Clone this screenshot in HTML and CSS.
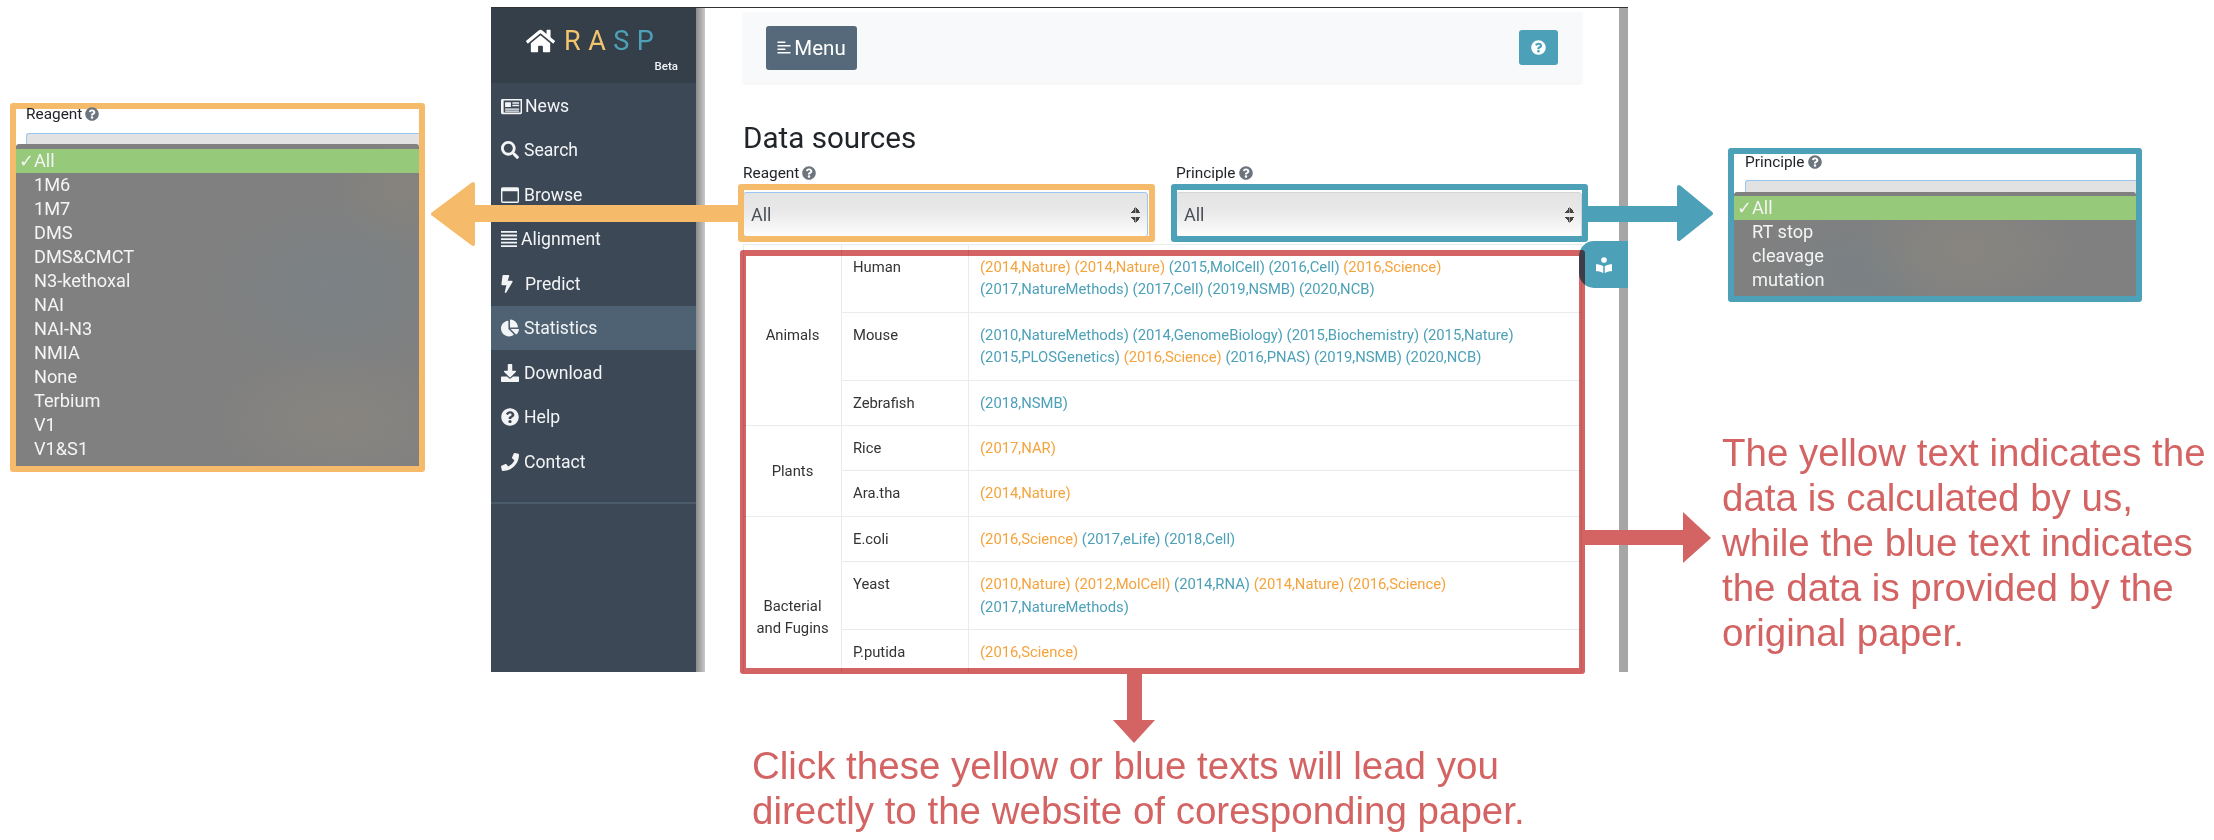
FILE: index.html
```html
<!DOCTYPE html>
<html lang="en">
<head>
  <meta charset="UTF-8">
  <title>RASP data sources</title>
  <link rel="stylesheet" href="styles.css">
</head>
<body>
  <svg class="sprite" width="0" height="0">
    <symbol id="i-home" viewBox="0 0 576 512"><path d="M280.37 148.26L96 300.11V464a16 16 0 0 0 16 16l112.06-.29a16 16 0 0 0 15.92-16V368a16 16 0 0 1 16-16h64a16 16 0 0 1 16 16v95.64a16 16 0 0 0 16 16.05L464 480a16 16 0 0 0 16-16V300L295.67 148.26a12.19 12.19 0 0 0-15.3 0zM571.6 251.47L488 182.56V44.05a12 12 0 0 0-12-12h-56a12 12 0 0 0-12 12v72.61L318.47 43a48 48 0 0 0-61 0L4.34 251.47a12 12 0 0 0-1.6 16.9l25.5 31A12 12 0 0 0 45.15 301l235.22-193.74a12.19 12.19 0 0 1 15.3 0L530.9 301a12 12 0 0 0 16.9-1.6l25.5-31a12 12 0 0 0-1.7-16.93z"/></symbol>
    <symbol id="i-news" viewBox="0 0 576 448"><path fill-rule="evenodd" d="M40 32h536v376a40 40 0 0 1-40 40H40a40 40 0 0 1-40-40V72a40 40 0 0 1 40-40zm32 40v328h464V72z"/><path d="M112 120h160v130H112zM312 120h184v40H312zM312 190h184v40H312zM112 290h384v36H112zM112 350h384v30H112z"/></symbol>
    <symbol id="i-search" viewBox="0 0 512 512"><path d="M505 442.7L405.3 343c-4.5-4.5-10.6-7-17-7H372c27.6-35.3 44-79.7 44-128C416 93.1 322.9 0 208 0S0 93.1 0 208s93.1 208 208 208c48.3 0 92.7-16.4 128-44v16.3c0 6.4 2.5 12.5 7 17l99.7 99.7c9.4 9.4 24.6 9.4 33.9 0l28.3-28.3c9.4-9.4 9.4-24.6.1-34zM208 336c-70.7 0-128-57.2-128-128 0-70.7 57.2-128 128-128 70.7 0 128 57.2 128 128 0 70.7-57.2 128-128 128z"/></symbol>
    <symbol id="i-window" viewBox="0 0 512 448"><path fill-rule="evenodd" d="M48 0h416a48 48 0 0 1 48 48v352a48 48 0 0 1-48 48H48a48 48 0 0 1-48-48V48A48 48 0 0 1 48 0zm-8 120v280a8 8 0 0 0 8 8h416a8 8 0 0 0 8-8V120z"/></symbol>
    <symbol id="i-justify" viewBox="0 0 448 448"><path d="M0 0h448v52H0zM0 100h448v52H0zM0 200h448v52H0zM0 300h448v52H0zM0 396h448v52H0z"/></symbol>
    <symbol id="i-bolt" viewBox="0 0 320 512"><path d="M296 160H180.6l42.6-129.8C227.2 15 215.7 0 200 0H56C44 0 33.8 8.9 32.2 20.8l-32 240C-1.7 275.2 9.5 288 24 288h118.7L96.6 482.5c-3.6 15.2 8 29.5 23.3 29.5 8.4 0 16.4-4.4 20.8-12l176-304c9.3-15.9-2.2-36-20.7-36z"/></symbol>
    <symbol id="i-pie" viewBox="0 0 544 512"><path d="M527.79 288H290.5l158.03 158.03c6.04 6.04 15.98 6.53 22.19.68 38.7-36.46 65.32-85.61 73.13-140.86 1.34-9.46-6.51-17.85-16.06-17.85zm-15.83-64.8C503.72 103.74 408.26 8.28 288.8.04 279.68-.59 272 7.1 272 16.24V240h223.77c9.14 0 16.82-7.68 16.19-16.8zM224 288V50.71c0-9.55-8.39-17.4-17.84-16.06C86.99 51.49-4.1 155.6.14 280.37 4.5 408.51 114.83 513.59 243.03 511.98c50.4-.63 96.97-16.87 135.26-44.03 7.9-5.6 8.42-17.23 1.57-24.08L224 288z"/></symbol>
    <symbol id="i-download" viewBox="0 0 512 512"><path d="M216 0h80c13.3 0 24 10.7 24 24v168h88c17.8 0 26.7 21.5 14.1 34.1L269.9 378.3c-7.5 7.5-19.8 7.5-27.3 0L90.1 226.1C77.5 213.5 86.4 192 104.2 192H192V24c0-13.3 10.7-24 24-24zM512 376v112c0 13.3-10.7 24-24 24H24c-13.3 0-24-10.7-24-24V376c0-13.3 10.7-24 24-24h146.7l49 49c20.1 20.1 52.5 20.1 72.6 0l49-49H488c13.3 0 24 10.7 24 24z"/></symbol>
    <symbol id="i-help" viewBox="0 0 512 512"><path d="M504 256c0 136.997-111.043 248-248 248S8 392.997 8 256C8 119.083 119.043 8 256 8s248 111.083 248 248zM262.655 90c-54.497 0-89.255 22.957-116.549 63.758-3.536 5.286-2.353 12.415 2.715 16.258l34.699 26.31c5.205 3.947 12.621 3.008 16.665-2.122 17.864-22.658 30.113-35.797 57.303-35.797 20.429 0 45.698 13.148 45.698 32.958 0 14.976-12.363 22.667-32.534 33.976C247.128 238.528 216 254.941 216 296v4c0 6.627 5.373 12 12 12h56c6.627 0 12-5.373 12-12v-1.333c0-28.462 83.186-29.647 83.186-106.667 0-58.002-60.165-102-116.531-102zM256 338c-25.365 0-46 20.635-46 46 0 25.364 20.635 46 46 46s46-20.636 46-46c0-25.365-20.635-46-46-46z"/></symbol>
    <symbol id="i-phone" viewBox="0 0 512 512"><path d="M493.4 24.6l-104-24c-11.3-2.6-22.9 3.3-27.5 13.9l-48 112c-4.2 9.8-1.4 21.3 6.9 28l60.6 49.6c-36 76.7-98.9 140.5-177.2 177.2l-49.6-60.6c-6.8-8.3-18.2-11.1-28-6.9l-112 48C3.9 366.5-2 378.1.6 389.4l24 104C27.1 504.2 36.7 512 48 512c256.1 0 464-207.5 464-464 0-11.2-7.7-20.9-18.6-23.4z"/></symbol>
    <symbol id="i-left" viewBox="0 0 448 448"><path d="M0 20h270v48H0zM0 140h448v48H0zM0 260h270v48H0zM0 380h448v48H0z"/></symbol>
    <symbol id="i-reader" viewBox="0 0 512 512"><circle cx="256" cy="96" r="90"/><path d="M0 232c70 0 160 12 232 60v220c-72-44-162-56-232-56zM512 232c-70 0-160 12-232 60v220c72-44 162-56 232-56z"/></symbol>
  </svg>

  <div class="shot">
    <aside class="side">
      <div class="brand">
        <div class="logo">
          <svg class="logo-icon"><use href="#i-home"/></svg>
          <span class="logo-word"><span class="gold">R</span><span class="gold">A</span><span class="teal">S</span><span class="teal">P</span></span>
        </div>
        <div class="beta">Beta</div>
      </div>
      <nav class="nav">
        <a class="nav-item"><svg class="ico ico-news"><use href="#i-news"/></svg>News</a>
        <a class="nav-item"><svg class="ico"><use href="#i-search"/></svg>Search</a>
        <a class="nav-item"><svg class="ico"><use href="#i-window"/></svg>Browse</a>
        <a class="nav-item"><svg class="ico ico-tight"><use href="#i-justify"/></svg>Alignment</a>
        <a class="nav-item"><svg class="ico ico-bolt"><use href="#i-bolt"/></svg>Predict</a>
        <a class="nav-item active"><svg class="ico"><use href="#i-pie"/></svg>Statistics</a>
        <a class="nav-item"><svg class="ico"><use href="#i-download"/></svg>Download</a>
        <a class="nav-item"><svg class="ico"><use href="#i-help"/></svg>Help</a>
        <a class="nav-item"><svg class="ico"><use href="#i-phone"/></svg>Contact</a>
      </nav>
    </aside>
    <div class="side-shadow"></div>

    <main class="main">
      <div class="topbar">
        <button class="btn-menu"><svg class="ico-menu"><use href="#i-left"/></svg>Menu</button>
        <button class="btn-help"><svg class="ico-q"><use href="#i-help"/></svg></button>
      </div>

      <h3 class="title">Data sources</h3>

      <div class="filters">
        <div>
          <div class="lbl">Reagent <svg class="lbl-q"><use href="#i-help"/></svg></div>
          <div class="sel focus"><span>All</span><span class="updown"></span></div>
        </div>
        <div>
          <div class="lbl">Principle <svg class="lbl-q"><use href="#i-help"/></svg></div>
          <div class="sel"><span>All</span><span class="updown"></span></div>
        </div>
      </div>

      <table class="papers">
        <tr>
          <td class="group" rowspan="3">Animals</td>
          <td class="sp">Human</td>
          <td><a class="y">(2014,Nature)</a> <a class="y">(2014,Nature)</a> <a class="b">(2015,MolCell)</a> <a class="b">(2016,Cell)</a> <a class="y">(2016,Science)</a><br>
            <a class="b">(2017,NatureMethods)</a> <a class="b">(2017,Cell)</a> <a class="b">(2019,NSMB)</a> <a class="b">(2020,NCB)</a></td>
        </tr>
        <tr>
          <td class="sp">Mouse</td>
          <td><a class="b">(2010,NatureMethods)</a> <a class="b">(2014,GenomeBiology)</a> <a class="b">(2015,Biochemistry)</a> <a class="b">(2015,Nature)</a><br>
            <a class="b">(2015,PLOSGenetics)</a> <a class="y">(2016,Science)</a> <a class="b">(2016,PNAS)</a> <a class="b">(2019,NSMB)</a> <a class="b">(2020,NCB)</a></td>
        </tr>
        <tr>
          <td class="sp">Zebrafish</td>
          <td><a class="b">(2018,NSMB)</a></td>
        </tr>
        <tr>
          <td class="group" rowspan="2">Plants</td>
          <td class="sp">Rice</td>
          <td><a class="y">(2017,NAR)</a></td>
        </tr>
        <tr>
          <td class="sp">Ara.tha</td>
          <td><a class="y">(2014,Nature)</a></td>
        </tr>
        <tr>
          <td class="group group-low" rowspan="3">Bacterial<br>and Fugins</td>
          <td class="sp">E.coli</td>
          <td><a class="y">(2016,Science)</a> <a class="b">(2017,eLife)</a> <a class="b">(2018,Cell)</a></td>
        </tr>
        <tr>
          <td class="sp">Yeast</td>
          <td><a class="y">(2010,Nature)</a> <a class="y">(2012,MolCell)</a> <a class="b">(2014,RNA)</a> <a class="y">(2014,Nature)</a> <a class="y">(2016,Science)</a><br>
            <a class="b">(2017,NatureMethods)</a></td>
        </tr>
        <tr>
          <td class="sp">P.putida</td>
          <td><a class="y">(2016,Science)</a></td>
        </tr>
      </table>
    </main>
    <div class="edge"></div>
    <div class="tab"><svg class="ico-reader"><use href="#i-reader"/></svg></div>
  </div>

  <!-- dropdown callouts -->
  <div class="callout callout-orange">
    <div class="lbl">Reagent <svg class="lbl-q"><use href="#i-help"/></svg></div>
    <div class="stub"></div>
    <ul class="menu">
      <li class="on">All</li>
      <li>1M6</li>
      <li>1M7</li>
      <li>DMS</li>
      <li>DMS&amp;CMCT</li>
      <li>N3-kethoxal</li>
      <li>NAI</li>
      <li>NAI-N3</li>
      <li>NMIA</li>
      <li>None</li>
      <li>Terbium</li>
      <li>V1</li>
      <li>V1&amp;S1</li>
    </ul>
  </div>

  <div class="callout callout-blue">
    <div class="lbl">Principle <svg class="lbl-q"><use href="#i-help"/></svg></div>
    <div class="stub"></div>
    <ul class="menu">
      <li class="on">All</li>
      <li>RT stop</li>
      <li>cleavage</li>
      <li>mutation</li>
    </ul>
  </div>

  <!-- frames and arrows drawn over the screenshot -->
  <div class="frame frame-orange"></div>
  <div class="frame frame-blue"></div>
  <div class="frame frame-red"></div>

  <svg class="arrows" width="2214" height="840">
    <path class="a-orange" d="M738 207H473V184L433 214 473 244V220H738z"/>
    <path class="a-blue" d="M1588 208H1679V187L1711 213.5 1679 239V220H1588z"/>
    <path class="a-red" d="M1585 530H1683V512L1711 538 1683 563V545H1585z"/>
    <path class="a-red" d="M1127 674H1142V720H1155L1134 743 1113 720H1127z"/>
  </svg>

  <p class="note note-right">The yellow text indicates the data is calculated by us, while the blue text indicates the data is provided by the original paper.</p>
  <p class="note note-bottom">Click these yellow or blue texts will lead you directly to the website of coresponding paper.</p>
</body>
</html>
```

FILE: styles.css
```css
html, body {
  margin: 0;
  padding: 0;
}
body {
  position: relative;
  width: 2214px;
  height: 840px;
  overflow: hidden;
  background: #fff;
  font-family: Roboto, "Liberation Sans", sans-serif;
  color: #212529;
}
.sprite {
  position: absolute;
}
svg {
  fill: currentColor;
}

/* the screenshot in the middle */
.shot {
  position: absolute;
  left: 491px;
  top: 7px;
  width: 1137px;
  height: 665px;
  display: flex;
  overflow: hidden;
  border-top: 1px solid #333;
  box-sizing: border-box;
}
.side {
  width: 205px;
  flex: none;
  background: #3c4855;
  color: #f2f4f6;
}
.brand {
  height: 75px;
  background: #343f4a;
  padding: 20px 18px 0 35px;
  box-sizing: border-box;
}
.logo {
  display: flex;
  align-items: center;
  height: 26px;
}
.logo-icon {
  width: 29px;
  height: 26px;
  color: #fff;
  margin-right: 9px;
}
.logo-word {
  font-size: 27px;
  line-height: 26px;
  letter-spacing: 7.5px;
  white-space: nowrap;
}
.gold {
  color: #f2c46d;
}
.teal {
  color: #4ca0b8;
}
.beta {
  font-size: 11.5px;
  font-weight: 500;
  text-align: right;
  margin-top: 5px;
}
.nav {
  padding-bottom: 18px;
  border-bottom: 2px solid #4c5b69;
}
.nav-item {
  display: flex;
  align-items: center;
  height: 44.5px;
  padding: 1px 0 0 10px;
  box-sizing: border-box;
  font-size: 17.6px;
}
.nav-item.active {
  background: #4f6273;
}
.ico {
  width: 18px;
  height: 18px;
  margin-right: 5px;
  flex: none;
}
.ico-news {
  width: 21px;
  margin-right: 3px;
}
.ico-tight {
  width: 16px;
  height: 16px;
  margin-right: 4px;
}
.ico-bolt {
  width: 12px;
  margin-right: 12px;
}
.side-shadow {
  width: 9px;
  flex: none;
  background: linear-gradient(to right, #8b8b8b, #c9c9c9);
}
.edge {
  width: 9px;
  flex: none;
  background: #a6a6a6;
}
.tab {
  position: absolute;
  right: 0;
  top: 233px;
  width: 49px;
  height: 47px;
  background: #4ca0b8;
  border-radius: 15px 0 0 15px;
  display: flex;
  align-items: center;
  justify-content: center;
}
.ico-reader {
  width: 16px;
  height: 16px;
  color: #fff;
}

/* main column */
.main {
  width: 914px;
  flex: none;
  padding: 4px 37px 0 38px;
  box-sizing: border-box;
}
.topbar {
  height: 71px;
  background: #f8f9fa;
  box-shadow: 0 1px 2px rgba(0,0,0,0.06);
  display: flex;
  align-items: center;
  justify-content: space-between;
  padding: 0 24px 0 23px;
}
.btn-menu {
  width: 91px;
  height: 44px;
  border: none;
  border-radius: 3px;
  background: #56697a;
  color: #fff;
  font-family: inherit;
  font-size: 20.5px;
  display: flex;
  align-items: center;
  justify-content: center;
  padding: 0;
}
.ico-menu {
  width: 14px;
  height: 13px;
  margin-right: 3px;
}
.btn-help {
  width: 39px;
  height: 35px;
  border: none;
  border-radius: 3px;
  background: #4ca0b8;
  color: #fff;
  padding: 0;
  display: flex;
  align-items: center;
  justify-content: center;
}
.ico-q {
  width: 15px;
  height: 15px;
}
.title {
  font-size: 29.6px;
  font-weight: 400;
  line-height: 36px;
  margin: 36.5px 0 0;
}
.filters {
  display: grid;
  grid-template-columns: 405px 406px;
  column-gap: 28px;
  margin-top: 5px;
}
.lbl {
  font-size: 15.4px;
  line-height: 24px;
  display: flex;
  align-items: center;
  gap: 3px;
}
.lbl-q {
  width: 14px;
  height: 14px;
  color: #6c757d;
}
.sel {
  height: 45px;
  margin-top: 7.5px;
  padding: 0 7px;
  box-sizing: border-box;
  border: 1px solid #d5d5d5;
  border-radius: 3px;
  background: linear-gradient(to bottom, #e4e4e4, #e8e8e8 40%, #fdfdfd);
  color: #495057;
  font-size: 18px;
  display: flex;
  align-items: center;
  justify-content: space-between;
}
.sel.focus {
  border-color: #9cc6f2;
}
.updown {
  width: 9px;
  height: 16px;
  background:
    linear-gradient(to top left, #444 50%, transparent 50%) left top / 50% 6px no-repeat,
    linear-gradient(to top right, #444 50%, transparent 50%) right top / 50% 6px no-repeat,
    linear-gradient(to bottom left, #444 50%, transparent 50%) left bottom / 50% 6px no-repeat,
    linear-gradient(to bottom right, #444 50%, transparent 50%) right bottom / 50% 6px no-repeat;
}

/* data table */
.papers {
  width: 839px;
  margin-top: 7px;
  border-collapse: collapse;
  table-layout: fixed;
  font-size: 14.8px;
  line-height: 22.4px;
  color: #333;
}
.papers td {
  border: 1px solid #e9ecef;
  padding: 11px;
  vertical-align: top;
}
.papers td.group {
  width: 75px;
  text-align: center;
  vertical-align: middle;
}
.papers td.group-low {
  vertical-align: top;
  padding-top: 78px;
}
.papers td.sp {
  width: 104px;
}
.y {
  color: #f5a33c;
}
.b {
  color: #4ca0b8;
}

/* dropdown callouts */
.callout {
  position: absolute;
  box-sizing: border-box;
  display: flex;
  flex-direction: column;
  background: #fff;
  border: 6px solid;
  border-radius: 3px;
}
.callout-orange {
  left: 10px;
  top: 103px;
  width: 415px;
  height: 369px;
  border-color: #f6bb6a;
}
.callout-blue {
  left: 1728px;
  top: 148px;
  width: 414px;
  height: 154px;
  border-color: #4ca0b8;
}
.callout .lbl {
  flex: none;
  padding-left: 10px;
}
.callout-orange .lbl {
  margin-top: -7px;
}
.callout-blue .lbl {
  margin-top: -4px;
  padding-left: 11px;
}
.stub {
  flex: none;
  margin-left: 10px;
  border: 1px solid #9cc6f2;
  border-bottom: none;
  border-right: none;
  border-radius: 3px 0 0 0;
  background: #e2e2e2;
  box-sizing: border-box;
}
.callout-orange .stub {
  height: 12px;
  margin-top: 7px;
}
.callout-blue .stub {
  height: 13px;
  margin-top: 6px;
  margin-left: 11px;
}
.menu {
  flex: 1;
  list-style: none;
  margin: -1px 0 0;
  padding: 5px 0 0;
  position: relative;
  border-radius: 3px 3px 0 0;
  color: #f4f4f4;
  font-size: 18.2px;
  line-height: 23.8px;
}
.callout-orange .menu {
  background:
    radial-gradient(ellipse 130px 90px at 79% 45%, #7b8285, transparent),
    radial-gradient(ellipse 130px 70px at 80% 86%, #888580, transparent),
    radial-gradient(ellipse 70px 60px at 96% 14%, #86837d, transparent),
    #808080;
}
.callout-blue .menu {
  padding-top: 4px;
  background:
    radial-gradient(ellipse 110px 60px at 58% 55%, #898680, transparent),
    radial-gradient(ellipse 100px 60px at 30% 75%, #7a8184, transparent),
    #808080;
}
.menu li {
  height: 24px;
  padding-left: 18px;
}
.menu li.on {
  background: #97c97b;
  position: relative;
}
.menu li.on::before {
  content: "\2713";
  position: absolute;
  left: 3px;
  font-family: "DejaVu Sans", sans-serif;
  font-size: 18px;
  font-weight: bold;
}

/* annotation frames and arrows */
.frame {
  position: absolute;
  box-sizing: border-box;
  border: 6px solid;
  border-radius: 3px;
}
.frame-orange {
  left: 738px;
  top: 184px;
  width: 417px;
  height: 58px;
  border-color: #f6bb6a;
}
.frame-blue {
  left: 1171px;
  top: 184px;
  width: 417px;
  height: 58px;
  border-color: #4ca0b8;
}
.frame-red {
  left: 740px;
  top: 250px;
  width: 845px;
  height: 424px;
  border-color: #d46363;
  mix-blend-mode: multiply;
}
.arrows {
  position: absolute;
  left: 0;
  top: 0;
}
.a-orange {
  fill: #f6bb6a;
  stroke: #f6bb6a;
  stroke-width: 4;
  stroke-linejoin: round;
}
.a-blue {
  fill: #4ca0b8;
  stroke: #4ca0b8;
  stroke-width: 4;
  stroke-linejoin: round;
}
.a-red {
  fill: #d46363;
}
.note {
  position: absolute;
  margin: 0;
  color: #d46363;
  font-family: "Liberation Sans", Arial, sans-serif;
  font-size: 38.5px;
  line-height: 45px;
}
.note-right {
  left: 1722px;
  top: 430px;
  width: 492px;
}
.note-bottom {
  left: 752px;
  top: 743px;
  width: 800px;
}
```
